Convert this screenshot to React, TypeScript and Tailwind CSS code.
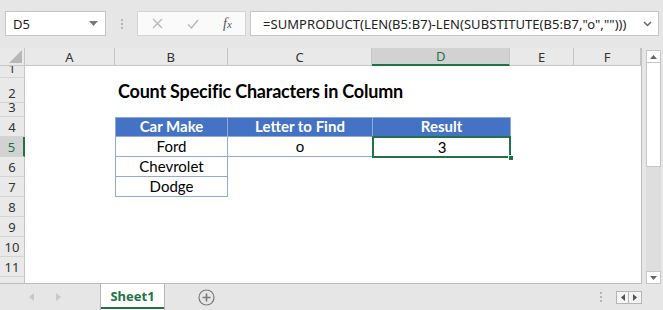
import React from "react";

const COLS = [
  { key: "A", w: 90 },
  { key: "B", w: 113 },
  { key: "C", w: 145 },
  { key: "D", w: 138 },
  { key: "E", w: 64 },
  { key: "F", w: 67 },
];
const ROWS = [12, 25, 14, 20, 20, 20, 20, 20, 20, 20, 20, 7];

const UI = { fontFamily: '"Noto Sans", "Open Sans", sans-serif' };
const CELL = { fontFamily: 'Lato, "Open Sans", sans-serif' };

function Toolbar() {
  return (
    <div className="h-[48px] shrink-0 flex items-start pt-[11px] pl-[5px]" style={UI}>
      <div className="w-[101px] h-[25px] bg-white border border-[#c6c6c6] flex items-center justify-between pl-[7px] pr-[7px]">
        <span className="text-[13px] leading-[16px] text-[#222]">D5</span>
        <svg width="9" height="5" viewBox="0 0 9 5"><path d="M0 0h9L4.5 5z" fill="#777" /></svg>
      </div>
      <div className="w-[31px] h-[25px] flex flex-col items-center justify-center gap-[2px]">
        <div className="w-[2px] h-[2px] bg-[#b5b5b5]" />
        <div className="w-[2px] h-[2px] bg-[#b5b5b5]" />
        <div className="w-[2px] h-[2px] bg-[#b5b5b5]" />
      </div>
      <div className="w-[109px] h-[25px] bg-[#fafafa] border border-[#d4d4d4] flex items-center">
        <div className="w-[38px] flex justify-center">
          <svg width="11" height="11" viewBox="0 0 11 11"><path d="M1 1l9 9M10 1l-9 9" stroke="#b9b9b9" strokeWidth="1.4" /></svg>
        </div>
        <div className="w-[34px] flex justify-center">
          <svg width="12" height="10" viewBox="0 0 12 10"><path d="M1 5.5l3.5 3.5L11 1" stroke="#b9b9b9" strokeWidth="1.4" fill="none" /></svg>
        </div>
        <div className="w-[35px] flex justify-center">
          <span className="text-[14px] leading-[16px] italic text-[#555]" style={{ fontFamily: '"Liberation Serif", serif' }}>
            f<span className="text-[11px]">x</span>
          </span>
        </div>
      </div>
      <div className="ml-[4px] w-[409px] h-[25px] bg-white border border-[#c6c6c6] flex items-center justify-between pl-[12px] pr-[6px]">
        <span className="text-[13px] leading-[16px] text-[#222] whitespace-nowrap tracking-[0.06px]">
          =SUMPRODUCT(LEN(B5:B7)-LEN(SUBSTITUTE(B5:B7,"o","")))
        </span>
        <svg width="9" height="6" viewBox="0 0 9 6"><path d="M1 1l3.5 3.5L8 1" stroke="#666" strokeWidth="1.5" fill="none" /></svg>
      </div>
    </div>
  );
}

function ColHeader() {
  return (
    <div className="flex h-[18px] shrink-0" style={UI}>
      <div className="w-[25px] h-full bg-[#e9e9e9] border-r border-b border-[#c6c6c6] flex items-end justify-end pr-[2px] pb-[2px]">
        <svg width="13" height="13" viewBox="0 0 13 13"><path d="M13 0V13H0z" fill="#b7b7b7" /></svg>
      </div>
      {COLS.map((c) =>
        c.key === "D" ? (
          <div
            key={c.key}
            className="h-full bg-[#d2d2d2] border-r border-[#c6c6c6] border-b-2 border-b-[#217346] flex items-center justify-center text-[13px] leading-[16px] text-[#217346]"
            style={{ width: c.w }}
          >
            {c.key}
          </div>
        ) : (
          <div
            key={c.key}
            className="h-full bg-[#e9e9e9] border-r border-b border-[#c6c6c6] flex items-center justify-center text-[13px] leading-[16px] text-[#333]"
            style={{ width: c.w }}
          >
            {c.key}
          </div>
        )
      )}
    </div>
  );
}

type CellSpec = { text?: string; kind?: "head" | "body" | "title" | "sel" };

function cellSpec(r: number, c: string): CellSpec {
  if (r === 2 && c === "B") return { text: "Count Specific Characters in Column", kind: "title" };
  if (r === 4) {
    if (c === "B") return { text: "Car Make", kind: "head" };
    if (c === "C") return { text: "Letter to Find", kind: "head" };
    if (c === "D") return { text: "Result", kind: "head" };
  }
  if (r === 5) {
    if (c === "B") return { text: "Ford", kind: "body" };
    if (c === "C") return { text: "o", kind: "body" };
    if (c === "D") return { text: "3", kind: "sel" };
  }
  if (r === 6 && c === "B") return { text: "Chevrolet", kind: "body" };
  if (r === 7 && c === "B") return { text: "Dodge", kind: "body" };
  return {};
}

function Cell({ r, c, w, h }: { r: number; c: string; w: number; h: number }) {
  const s = cellSpec(r, c);
  const style = { width: w, height: h, ...CELL };
  if (s.kind === "title") {
    return (
      <div className="relative z-10 shrink-0" style={style}>
        <span className="absolute left-[3px] bottom-[1px] whitespace-nowrap text-[18px] font-bold text-black leading-[22px] tracking-[-0.2px]">
          {s.text}
        </span>
      </div>
    );
  }
  if (s.kind === "head") {
    return (
      <div
        className={`shrink-0 bg-[#4472c4] border-t border-r border-b border-[#8ea9db] flex items-end justify-center pb-[1px] text-[15px] font-bold text-white leading-[18px] ${c === "B" ? "border-l" : ""}`}
        style={style}
      >
        {s.text}
      </div>
    );
  }
  if (s.kind === "body") {
    return (
      <div
        className={`shrink-0 bg-white border-r border-b border-[#8ea9db] flex items-end justify-center pb-[1px] text-[15px] text-black leading-[18px] ${c === "B" ? "border-l" : ""}`}
        style={style}
      >
        {s.text}
      </div>
    );
  }
  if (s.kind === "sel") {
    return (
      <div className="relative shrink-0 bg-white flex items-end justify-center pb-[1px] text-[15px] text-black leading-[18px]" style={style}>
        {s.text}
        <div className="absolute left-[-1px] top-[-1px] right-[0px] bottom-[-1px] border-2 border-[#217346]" />
        <div className="absolute right-[-3px] bottom-[-4px] w-[6px] h-[6px] bg-[#217346] border border-white" />
      </div>
    );
  }
  return <div className="shrink-0" style={style} />;
}

function Grid() {
  return (
    <div className="w-[642px] bg-white flex flex-col border-r border-b border-[#bdbdbd] overflow-hidden">
      <ColHeader />
      {ROWS.map((h, i) => {
        const r = i + 1;
        const sel = r === 5;
        return (
          <div key={r} className="flex shrink-0" style={{ height: h }}>
            <div
              className={`w-[25px] shrink-0 h-full flex items-end justify-center overflow-hidden text-[13px] leading-[13px] pb-[2px] border-b border-[#d4d4d4] ${
                sel ? "bg-[#d2d2d2] text-[#217346] border-r-2 border-r-[#217346]" : "bg-[#e9e9e9] text-[#333] border-r border-r-[#c6c6c6]"
              }`}
              style={UI}
            >
              {r < 12 ? r : ""}
            </div>
            {COLS.map((c) => (
              <Cell key={c.key} r={r} c={c.key} w={c.w} h={h} />
            ))}
          </div>
        );
      })}
    </div>
  );
}

function VScroll() {
  return (
    <div className="ml-[4px] w-[15px] pt-[2px] flex flex-col">
      <div className="h-[13px] bg-white border border-[#c6c6c6] flex items-center justify-center">
        <svg width="7" height="4" viewBox="0 0 7 4"><path d="M0 4h7L3.5 0z" fill="#666" /></svg>
      </div>
      <div className="h-[104px] bg-white border border-[#c6c6c6] border-t-0" />
      <div className="flex-1 bg-[#dedede]" />
      <div className="h-[13px] bg-white border border-[#c6c6c6] flex items-center justify-center">
        <svg width="7" height="4" viewBox="0 0 7 4"><path d="M0 0h7L3.5 4z" fill="#666" /></svg>
      </div>
    </div>
  );
}

function TabBar() {
  return (
    <div className="h-[26px] shrink-0 flex items-stretch" style={UI}>
      <div className="w-[100px] flex items-center">
        <div className="w-[29px]" />
        <svg width="5" height="8" viewBox="0 0 5 8"><path d="M5 0v8L0 4z" fill="#c8c8c8" /></svg>
        <div className="w-[22px]" />
        <svg width="5" height="8" viewBox="0 0 5 8"><path d="M0 0v8L5 4z" fill="#c8c8c8" /></svg>
      </div>
      <div className="w-[65px] bg-white border-l border-r border-[#b5b5b5] flex flex-col">
        <div className="flex-1 flex items-center justify-center text-[13px] leading-[16px] font-bold text-[#217346]">Sheet1</div>
        <div className="h-[2px] bg-[#217346] mb-[1px]" />
      </div>
      <div className="w-[33px]" />
      <div className="flex items-center">
        <svg width="17" height="17" viewBox="0 0 17 17">
          <circle cx="8.5" cy="8.5" r="7.5" fill="none" stroke="#7a7a7a" strokeWidth="1.2" />
          <path d="M8.5 4.5v8M4.5 8.5h8" stroke="#7a7a7a" strokeWidth="1.6" />
        </svg>
      </div>
      <div className="flex-1" />
      <div className="flex items-center gap-[14px] pr-[21px]">
        <div className="flex flex-col gap-[2px]">
          <div className="w-[2px] h-[2px] bg-[#b5b5b5]" />
          <div className="w-[2px] h-[2px] bg-[#b5b5b5]" />
          <div className="w-[2px] h-[2px] bg-[#b5b5b5]" />
        </div>
        <div className="flex h-[13px] border border-[#b5b5b5] bg-[#f4f4f4]">
          <div className="w-[12px] flex items-center justify-center border-r border-[#b5b5b5]">
            <svg width="4" height="7" viewBox="0 0 4 7"><path d="M4 0v7L0 3.5z" fill="#555" /></svg>
          </div>
          <div className="w-[12px] flex items-center justify-center">
            <svg width="4" height="7" viewBox="0 0 4 7"><path d="M0 0v7L4 3.5z" fill="#555" /></svg>
          </div>
        </div>
      </div>
    </div>
  );
}

export default function App() {
  return (
    <div className="w-[663px] h-[310px] bg-[#e6e6e6] flex flex-col overflow-hidden">
      <Toolbar />
      <div className="h-[236px] shrink-0 flex">
        <Grid />
        <VScroll />
      </div>
      <TabBar />
    </div>
  );
}
